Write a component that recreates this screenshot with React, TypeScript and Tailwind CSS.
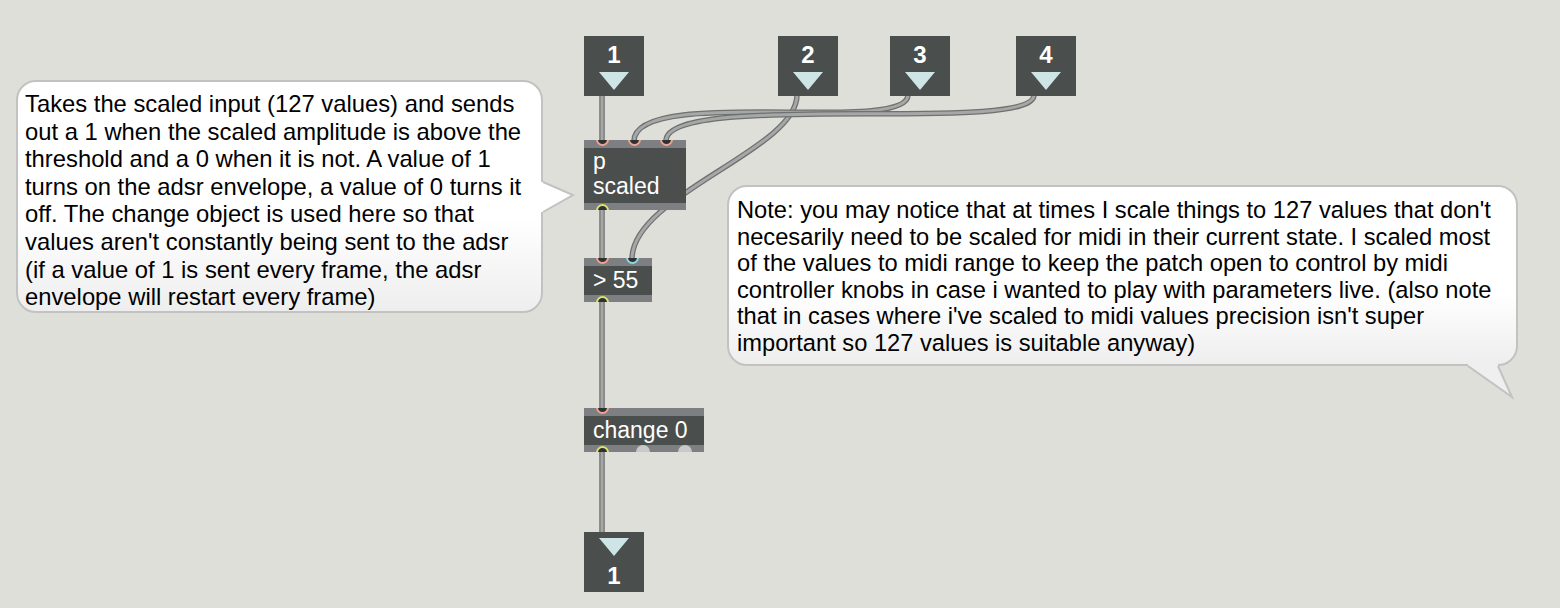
import React from "react";

const cords = [
  "M602 95 L602 141",
  "M797 95 C797 150, 632 195, 632 259",
  "M908 95 C908 135, 634 85, 634 141",
  "M1034 95 C1034 135, 666 90, 666 141",
  "M602 209 L602 259",
  "M602 302 L602 409",
  "M602 451 L602 533",
];

const note1 = [
  "Takes the scaled input (127 values) and sends",
  "out a 1 when the scaled amplitude is above the",
  "threshold and a 0 when it is not. A value of 1",
  "turns on the adsr envelope, a value of 0 turns it",
  "off. The change object is used here so that",
  "values aren't constantly being sent to the adsr",
  "(if a value of 1 is sent every frame, the adsr",
  "envelope will restart every frame)",
];

const note2 = [
  "Note: you may notice that at times I scale things to 127 values that don't",
  "necesarily need to be scaled for midi in their current state. I scaled most",
  "of the values to midi range to keep the patch open to control by midi",
  "controller knobs in case i wanted to play with parameters live. (also note",
  "that in cases where i've scaled to midi values precision isn't super",
  "important so 127 values is suitable anyway)",
];

const Tri = () => (
  <svg width="30" height="18" viewBox="0 0 30 18">
    <polygon points="0,0 30,0 15,18" fill="#cde5e6" />
  </svg>
);

const Inlet = ({ n, className }: { n: string; className: string }) => (
  <div className={`absolute w-[60px] h-[60px] bg-[#4a4e4c] flex flex-col items-center ${className}`}>
    <div className="mt-[9px] text-[24px] leading-[20px] font-bold text-white">{n}</div>
    <div className="mt-[7px]">
      <Tri />
    </div>
  </div>
);

const Outlet = ({ n, className }: { n: string; className: string }) => (
  <div className={`absolute w-[60px] h-[60px] bg-[#4a4e4c] flex flex-col items-center ${className}`}>
    <div className="mt-[6px]">
      <Tri />
    </div>
    <div className="mt-[10px] text-[24px] leading-[20px] font-bold text-white">{n}</div>
  </div>
);

// port ring, cut in half by the box edge
const Port = ({ className }: { className: string }) => (
  <div className={`absolute w-[13px] h-[13px] rounded-full border-2 bg-[#2e3130] ${className}`} />
);

const ObjBox = ({
  className,
  children,
  ports,
}: {
  className: string;
  children: React.ReactNode;
  ports: React.ReactNode;
}) => (
  <div className={`absolute bg-[#4a4e4c] overflow-hidden flex flex-col ${className}`}>
    <div className="h-[8px] bg-[#7e7f82]" />
    <div className="flex-1 px-[9px] text-[23px] text-white">{children}</div>
    <div className="h-[7px] bg-[#7e7f82]" />
    {ports}
  </div>
);

export default function App() {
  return (
    <div className="relative w-[1560px] h-[608px] overflow-hidden bg-[#dfdfd9] font-['Liberation_Sans',Arial,sans-serif]">
      {/* patch cords */}
      <svg className="absolute inset-0 pointer-events-none" width="1560" height="608">
        {cords.map((d, i) => (
          <g key={i} fill="none" strokeLinecap="round">
            <path d={d} stroke="#6f7070" strokeWidth="5.5" />
            <path d={d} stroke="#a6a7a7" strokeWidth="3" />
          </g>
        ))}
      </svg>

      <Inlet n="1" className="left-[584px] top-[36px]" />
      <Inlet n="2" className="left-[778px] top-[36px]" />
      <Inlet n="3" className="left-[890px] top-[36px]" />
      <Inlet n="4" className="left-[1016px] top-[36px]" />

      <ObjBox
        className="left-[584px] top-[140px] w-[102px] h-[70px]"
        ports={
          <>
            <Port className="left-[12px] top-[-7px] border-[#f0a294]" />
            <Port className="left-[44px] top-[-7px] border-[#f0a294]" />
            <Port className="left-[76px] top-[-7px] border-[#f0a294]" />
            <Port className="left-[12px] bottom-[-7px] border-[#dce36a]" />
          </>
        }
      >
        <div className="leading-[25px] pt-[1px]">p</div>
        <div className="leading-[25px]">scaled</div>
      </ObjBox>

      <ObjBox
        className="left-[584px] top-[258px] w-[68px] h-[44px]"
        ports={
          <>
            <Port className="left-[12px] top-[-7px] border-[#f0a294]" />
            <Port className="left-[42px] top-[-7px] border-[#8fd6e6]" />
            <Port className="left-[12px] bottom-[-7px] border-[#dce36a]" />
          </>
        }
      >
        <div className="leading-[29px]">&gt; 55</div>
      </ObjBox>

      <ObjBox
        className="left-[584px] top-[408px] w-[120px] h-[44px]"
        ports={
          <>
            <Port className="left-[12px] top-[-7px] border-[#f0a294]" />
            <Port className="left-[12px] bottom-[-7px] border-[#dce36a]" />
            <div className="absolute left-[52px] bottom-[-7px] w-[14px] h-[14px] rounded-full bg-[#c8c9c9]" />
            <div className="absolute left-[94px] bottom-[-7px] w-[14px] h-[14px] rounded-full bg-[#c8c9c9]" />
          </>
        }
      >
        <div className="leading-[29px]">change 0</div>
      </ObjBox>

      <Outlet n="1" className="left-[584px] top-[532px]" />

      {/* comment 1 */}
      <div className="absolute left-[16px] top-[80px] w-[527px] h-[233px] rounded-[20px] border-2 border-[#c2c2c2] bg-linear-to-b from-white from-60% to-[#eeeeee] pl-[7px] pt-[8px] text-[23.8px] leading-[27.6px] text-black">
        {note1.map((l) => (
          <div key={l} className="whitespace-nowrap">
            {l}
          </div>
        ))}
      </div>
      <svg className="absolute left-[539px] top-[179px]" width="40" height="38">
        <polygon points="0,3 4,3 34,16 4,33 0,33" fill="#ffffff" />
        <polyline points="4,3 34,16 4,33" fill="none" stroke="#c2c2c2" strokeWidth="2" />
      </svg>

      {/* comment 2 */}
      <div className="absolute left-[727px] top-[185px] w-[791px] h-[181px] rounded-[20px] border-2 border-[#c2c2c2] bg-linear-to-b from-white from-60% to-[#eeeeee] pl-[8px] pt-[10px] text-[23.7px] leading-[26.5px] text-black">
        {note2.map((l) => (
          <div key={l} className="whitespace-nowrap">
            {l}
          </div>
        ))}
      </div>
      <svg className="absolute left-[1462px] top-[358px]" width="56" height="44">
        <polygon points="6,4 36,4 36,8 50,39 6,8" fill="#efefef" />
        <polyline points="6,8 50,39 36,8" fill="none" stroke="#c2c2c2" strokeWidth="2" />
      </svg>
    </div>
  );
}
